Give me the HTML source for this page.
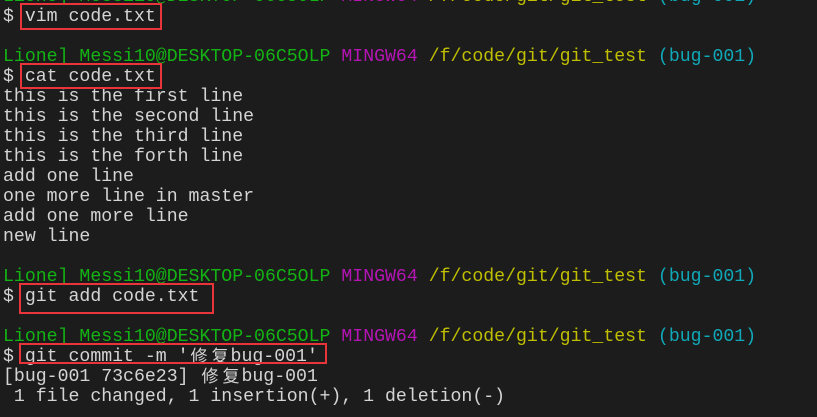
<!DOCTYPE html>
<html><head><meta charset="utf-8"><style>
html,body{margin:0;padding:0;background:#1c1c1c;width:817px;height:417px;overflow:hidden;}
.t{position:absolute;left:3px;top:-13px;font-family:"Liberation Mono","Noto Sans CJK SC",monospace;font-size:18.2px;line-height:20px;color:#d4d4d4;white-space:pre;}
.l{display:block;height:20px;overflow:visible;}
.g{color:#13b313}.m{color:#b514b5}.y{color:#bfbf00}.c{color:#10a8b8}
.k{display:inline-block;width:21px;height:20px;line-height:20px;vertical-align:top;text-align:center;font-family:"Noto Sans CJK SC",sans-serif;font-size:17px;position:relative;top:-2px;}
.b{position:absolute;border:2px solid #e8353a;box-sizing:border-box;}
</style></head><body>
<div class="t"><span class="g">Lione] Messi10@DESKTOP-06C5OLP</span> <span class="m">MINGW64</span> <span class="y">/f/code/git/git_test</span> <span class="c">(bug-001)</span>
$ vim code.txt

<span class="g">Lione] Messi10@DESKTOP-06C5OLP</span> <span class="m">MINGW64</span> <span class="y">/f/code/git/git_test</span> <span class="c">(bug-001)</span>
$ cat code.txt
this is the first line
this is the second line
this is the third line
this is the forth line
add one line
one more line in master
add one more line
new line

<span class="g">Lione] Messi10@DESKTOP-06C5OLP</span> <span class="m">MINGW64</span> <span class="y">/f/code/git/git_test</span> <span class="c">(bug-001)</span>
$ git add code.txt

<span class="g">Lione] Messi10@DESKTOP-06C5OLP</span> <span class="m">MINGW64</span> <span class="y">/f/code/git/git_test</span> <span class="c">(bug-001)</span>
<span class="l">$ git commit -m '<span class="k">修</span><span class="k">复</span>bug-001'</span><span class="l">[bug-001 73c6e23] <span class="k">修</span><span class="k">复</span>bug-001</span> 1 file changed, 1 insertion(+), 1 deletion(-)
</div>
<div class="b" style="left:20px;top:3px;width:142px;height:27px"></div>
<div class="b" style="left:20px;top:63px;width:142px;height:26px"></div>
<div class="b" style="left:19px;top:283px;width:195px;height:31px"></div>
<div class="b" style="left:19px;top:343px;width:308px;height:21px"></div>
</body></html>
